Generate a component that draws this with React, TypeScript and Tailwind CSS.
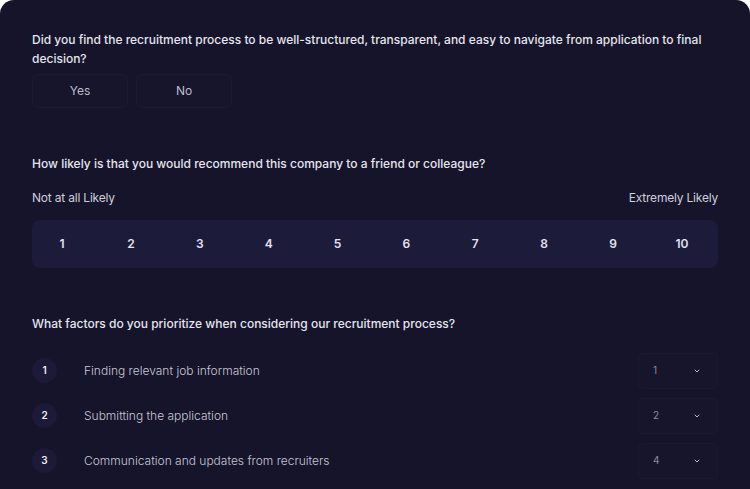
import React from "react";

const font = { fontFamily: "Inter, 'Noto Sans', sans-serif" };

function Chevron() {
  return (
    <svg width="8" height="8" viewBox="0 0 24 24" fill="none" stroke="#b9b8cc" strokeWidth="3" strokeLinecap="round" strokeLinejoin="round">
      <path d="M6 9l6 6 6-6" />
    </svg>
  );
}

const rows = [
  { n: "1", label: "Finding relevant job information", v: "1" },
  { n: "2", label: "Submitting the application", v: "2" },
  { n: "3", label: "Communication and updates from recruiters", v: "4" },
];

export default function App() {
  return (
    <div className="w-[750px] h-[489px] overflow-hidden bg-white" style={font}>
      <div className="h-[489px] rounded-t-[14px] bg-[#15142a] pt-[30px] px-[32px]">
        <p className="text-[12px] leading-[19px] font-medium text-[#e6e5ef]">
          Did you find the recruitment process to be well-structured, transparent, and easy to navigate from application to final decision?
        </p>
        <div className="mt-[6px] flex gap-[8px]">
          <button className="h-[34px] w-[96px] rounded-[6px] border border-[#1c1b33] bg-[#16152c] text-[12px] text-[#bdbccd]">Yes</button>
          <button className="h-[34px] w-[96px] rounded-[6px] border border-[#1c1b33] bg-[#16152c] text-[12px] text-[#bdbccd]">No</button>
        </div>

        <p className="mt-[46px] text-[12px] leading-[19px] font-medium text-[#e6e5ef]">
          How likely is that you would recommend this company to a friend or colleague?
        </p>
        <div className="mt-[15px] flex justify-between text-[12px] leading-[19px] text-[#cfcedb] tracking-[-0.2px]">
          <span>Not at all Likely</span>
          <span>Extremely Likely</span>
        </div>
        <div className="mt-[13px] h-[48px] rounded-[8px] bg-[#1d1b3a] flex items-center justify-between pl-[20px] pr-[26px]">
          {["1", "2", "3", "4", "5", "6", "7", "8", "9", "10"].map((n) => (
            <span key={n} className="w-[20px] text-center text-[12px] font-semibold text-[#e3e2ee]">{n}</span>
          ))}
        </div>

        <p className="mt-[46px] text-[12px] leading-[19px] font-medium text-[#e6e5ef]">
          What factors do you prioritize when considering our recruitment process?
        </p>
        <div className="mt-[15px] flex flex-col">
          {rows.map((r) => (
            <div key={r.n} className="h-[45px] flex items-center">
              <div className="w-[25px] h-[25px] rounded-full bg-[#1c1a37] flex items-center justify-center text-[10px] font-semibold text-[#eeeef6]">{r.n}</div>
              <span className="ml-[27px] flex-1 text-[12px] text-[#c9c8d6] font-light">{r.label}</span>
              <div className="w-[80px] h-[36px] rounded-[4px] border border-[#1a192f] bg-[#16152b] flex items-center justify-between pl-[14px] pr-[16px]">
                <span className="text-[10px] text-[#8c8ba2]">{r.v}</span>
                <Chevron />
              </div>
            </div>
          ))}
        </div>
      </div>
    </div>
  );
}
